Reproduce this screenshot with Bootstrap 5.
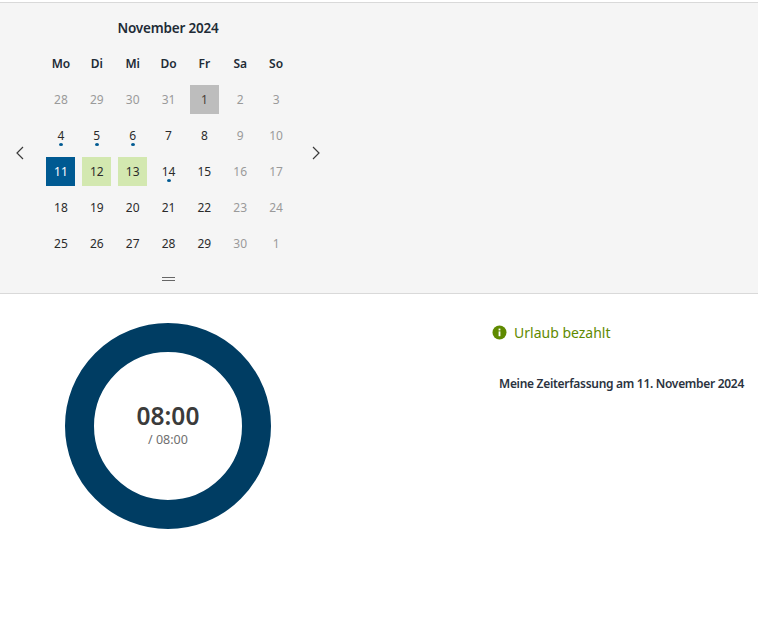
<!DOCTYPE html>
<html lang="de">
<head>
<meta charset="utf-8">
<title>Zeiterfassung</title>
<link href="https://cdn.jsdelivr.net/npm/bootstrap@5.3.0/dist/css/bootstrap.min.css" rel="stylesheet">
<style>
html,body{height:634px;overflow:hidden}
body{font-family:"Noto Sans","Open Sans",sans-serif;background:#fff;color:#212529;padding-top:2px}
.cal-panel{background:#f5f5f5;border-top:1px solid #d9d9d9;border-bottom:1px solid #d9d9d9;height:292px;width:758px}
.cal-wrap{width:336px}
.cal-title{height:42px;padding-top:15px;text-align:center;font-size:13.5px;line-height:20px;font-weight:600;color:#212b36;letter-spacing:-.2px}
.cal-arrow{flex:none;color:#3a3a3a}
.cal-arrow-l{width:43px;padding-right:3px}
.cal-arrow-r{width:42px;padding-left:2px}
.cal-grid{display:grid;grid-template-columns:repeat(7,35.86px);grid-auto-rows:36px;width:251px}
.cal-head,.cal-day{display:flex;align-items:center;justify-content:center;font-size:12px;line-height:16px}
.cal-head{font-weight:600;color:#212b36;padding-top:2px}
.cal-day{position:relative;color:#2b2b2b}
.cal-day>span{width:29px;height:29px;padding-top:2px;display:flex;align-items:center;justify-content:center}
.cal-day.is-off{color:#9a9a9a}
.cal-day.is-today>span{background:#bdbdbd;color:#4a4038}
.cal-day.is-sel>span{background:#005a92;color:#fff}
.cal-day.is-green>span{background:#d3e8b0}
.cal-dot{position:absolute;left:50%;bottom:7px;width:4px;height:3px;margin-left:-2px;border-radius:50%;background:#005a92}
.cal-handle{height:32px;padding-top:16px}
.cal-handle i{display:block;width:13px;height:4px;border-top:1px solid #666;border-bottom:1px solid #666;margin:0 auto}
.lower{width:758px}
.ring-col{width:336px;padding-top:29px}
.ring{width:206px;height:206px;border:29px solid #003d63;border-radius:50%;padding-bottom:3px}
.ring-main{font-size:24.5px;line-height:30px;font-weight:600;color:#3b3b3b;margin-top:-1px;margin-bottom:1px}
.ring-sub{font-size:12.5px;line-height:16px;color:#6f6f6f}
.side-col{width:422px;padding-top:28px}
.leave-line{padding-left:156px;height:21px;font-size:14px;line-height:21px;color:#5f8a00}
.leave-line svg{margin-right:7px;margin-top:-3px}
.day-title{margin:33px 14px 0 0;text-align:right;font-size:12px;line-height:16px;font-weight:600;color:#2b3340;letter-spacing:-.3px}
</style>
</head>
<body>
<section class="cal-panel">
  <div class="cal-wrap">
    <div class="cal-title">November 2024</div>
    <div class="d-flex align-items-center">
      <div class="cal-arrow cal-arrow-l d-flex justify-content-center">
        <svg width="10" height="14" viewBox="0 0 10 14" fill="none" stroke="currentColor" stroke-width="1.2"><path d="M8 1 2 7l6 6"/></svg>
      </div>
      <div>
        <div class="cal-grid">
          <div class="cal-head">Mo</div><div class="cal-head">Di</div><div class="cal-head">Mi</div><div class="cal-head">Do</div><div class="cal-head">Fr</div><div class="cal-head">Sa</div><div class="cal-head">So</div>
          <div class="cal-day is-off"><span>28</span></div><div class="cal-day is-off"><span>29</span></div><div class="cal-day is-off"><span>30</span></div><div class="cal-day is-off"><span>31</span></div><div class="cal-day is-today"><span>1</span></div><div class="cal-day is-off"><span>2</span></div><div class="cal-day is-off"><span>3</span></div>
          <div class="cal-day"><span>4</span><b class="cal-dot"></b></div><div class="cal-day"><span>5</span><b class="cal-dot"></b></div><div class="cal-day"><span>6</span><b class="cal-dot"></b></div><div class="cal-day"><span>7</span></div><div class="cal-day"><span>8</span></div><div class="cal-day is-off"><span>9</span></div><div class="cal-day is-off"><span>10</span></div>
          <div class="cal-day is-sel"><span>11</span></div><div class="cal-day is-green"><span>12</span></div><div class="cal-day is-green"><span>13</span></div><div class="cal-day"><span>14</span><b class="cal-dot"></b></div><div class="cal-day"><span>15</span></div><div class="cal-day is-off"><span>16</span></div><div class="cal-day is-off"><span>17</span></div>
          <div class="cal-day"><span>18</span></div><div class="cal-day"><span>19</span></div><div class="cal-day"><span>20</span></div><div class="cal-day"><span>21</span></div><div class="cal-day"><span>22</span></div><div class="cal-day is-off"><span>23</span></div><div class="cal-day is-off"><span>24</span></div>
          <div class="cal-day"><span>25</span></div><div class="cal-day"><span>26</span></div><div class="cal-day"><span>27</span></div><div class="cal-day"><span>28</span></div><div class="cal-day"><span>29</span></div><div class="cal-day is-off"><span>30</span></div><div class="cal-day is-off"><span>1</span></div>
        </div>
      </div>
      <div class="cal-arrow cal-arrow-r d-flex justify-content-center">
        <svg width="10" height="14" viewBox="0 0 10 14" fill="none" stroke="currentColor" stroke-width="1.2"><path d="M2 1l6 6-6 6"/></svg>
      </div>
    </div>
    <div class="cal-handle"><i></i></div>
  </div>
</section>
<section class="lower d-flex">
  <div class="ring-col d-flex justify-content-center">
    <div class="ring d-flex flex-column align-items-center justify-content-center">
      <div class="ring-main">08:00</div>
      <div class="ring-sub">/ 08:00</div>
    </div>
  </div>
  <div class="side-col">
    <div class="leave-line">
      <svg width="15" height="15" viewBox="0 0 15 15"><circle cx="7.5" cy="7.5" r="7" fill="#5f8a00"/><rect x="6.6" y="6.4" width="1.8" height="4.8" fill="#fff"/><rect x="6.6" y="3.6" width="1.8" height="1.8" fill="#fff"/></svg>Urlaub bezahlt
    </div>
    <div class="day-title">Meine Zeiterfassung am 11. November 2024</div>
  </div>
</section>
<script src="https://cdn.jsdelivr.net/npm/bootstrap@5.3.0/dist/js/bootstrap.bundle.min.js"></script>
</body>
</html>
